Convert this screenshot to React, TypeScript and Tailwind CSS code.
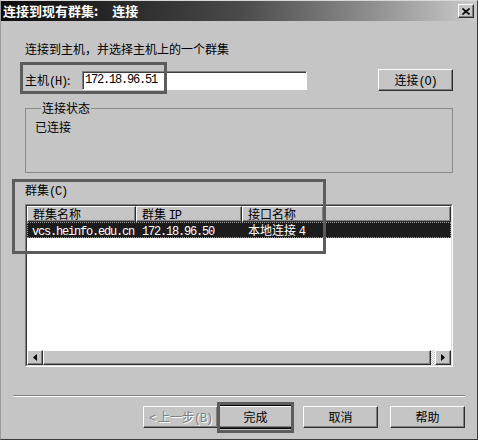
import React from 'react'

const cjk = "font-['Noto_Sans_CJK_SC','Noto_Sans_CJK_JP',sans-serif]"
const mono = "font-['Liberation_Mono',monospace] text-[12px] leading-none tracking-[-1.2px]"

const raised =
  'bg-[#c5c5c5] border border-t-white border-l-white border-r-[#2e2e2e] border-b-[#2e2e2e] shadow-[inset_-1px_-1px_0_#808080]'

const L = ({ children }: { children: React.ReactNode }) => <span className={mono}>{children}</span>

const Button = ({ children, className = '' }: { children: React.ReactNode; className?: string }) => (
  <div className={`${raised} h-[22px] w-[75px] flex items-center justify-center text-[12px] leading-[14px] ${className}`}>
    <span>{children}</span>
  </div>
)

const HeaderCell = ({ w, children }: { w: string; children?: React.ReactNode }) => (
  <div className={`${raised} ${w} h-full pl-[5px] flex items-center text-[12px] leading-[14px] shrink-0`}>
    <span className="whitespace-nowrap">{children}</span>
  </div>
)

const Arrow = ({ dir }: { dir: 'left' | 'right' }) => (
  <div className={`${raised} w-[16px] h-full flex items-center justify-center shrink-0`}>
    <svg width="4" height="7" viewBox="0 0 4 7">
      {dir === 'left' ? <path d="M4 0 L0 3.5 L4 7 Z" fill="#000" /> : <path d="M0 0 L4 3.5 L0 7 Z" fill="#000" />}
    </svg>
  </div>
)

export default function App() {
  return (
    <div className={`relative w-[478px] h-[440px] bg-[#c5c5c5] border border-t-[#d8d8d8] border-l-[#9a9a9a] border-r-[#3a3a3a] border-b-[#3a3a3a] text-black ${cjk}`}>
      {/* title bar */}
      <div className="h-[20px] bg-linear-to-r from-[#0c0c0c] via-[#4a4a4a] to-[#cbcbcb] flex items-center justify-between pl-[2px] pr-[3px]">
        <div className="text-white font-bold text-[13px] leading-[16px] flex">
          <span>连接到现有群集:</span>
          <span className="ml-[14px]">连接</span>
        </div>
        <div className={`${raised} w-[16px] h-[14px] flex items-center justify-center`}>
          <svg width="8" height="7" viewBox="0 0 8 7">
            <path d="M0.5 0.5 L7.5 6.5 M7.5 0.5 L0.5 6.5" stroke="#000" strokeWidth="1.6" />
          </svg>
        </div>
      </div>

      <div className="pl-[24px] flex flex-col">
        <div className="mt-[21px] h-[14px] text-[12px] leading-[14px]">连接到主机，并选择主机上的一个群集</div>

        <div className="mt-[13px] h-[22px] flex items-center">
          <div className="w-[57px] text-[12px] leading-[14px]">
            主机<L>(H)</L>:
          </div>
          <div className="w-[225px] h-[19px] bg-white border border-t-[#808080] border-l-[#808080] border-r-white border-b-white shadow-[inset_1px_1px_0_#404040] pl-[2px] flex items-center">
            <L>172.18.96.51</L>
          </div>
          <Button className="ml-[71px]">
            连接<L>(O)</L>
          </Button>
        </div>

        <fieldset className="mt-[10px] h-[72px] w-[428px] border border-[#8a8a8a] pl-[9px] pt-[5px]">
          <legend className="ml-[6px] px-[1px] text-[12px] leading-[14px]">连接状态</legend>
          <div className="text-[12px] leading-[14px]">已连接</div>
        </fieldset>

        <div className="mt-[10px] h-[14px] text-[12px] leading-[14px]">
          群集<L>(C)</L>
        </div>

        {/* list view */}
        <div className="mt-[7px] h-[163px] w-[428px] border border-t-[#808080] border-l-[#808080] border-r-white border-b-white">
          <div className="h-full border border-t-[#3a3a3a] border-l-[#3a3a3a] border-r-[#dcdcdc] border-b-[#dcdcdc] bg-white flex flex-col">
            <div className="h-[16px] flex shrink-0">
              <HeaderCell w="w-[109px]">群集名称</HeaderCell>
              <HeaderCell w="w-[106px]">
                群集 <L>IP</L>
              </HeaderCell>
              <HeaderCell w="w-[82px]">接口名称</HeaderCell>
              <div className={`${raised} flex-1 h-full`} />
            </div>
            <div className="h-[16px] bg-[#1c1c1c] text-white flex items-center shrink-0 border border-dotted border-[#9a9a9a] text-[12px] leading-[14px]">
              <div className="w-[108px] pl-[4px] overflow-hidden whitespace-nowrap">
                <L>vcs.heinfo.edu.cn</L>
              </div>
              <div className="w-[106px] pl-[6px]">
                <L>172.18.96.50</L>
              </div>
              <div className="pl-[6px] whitespace-nowrap">
                本地连接 <L>4</L>
              </div>
            </div>
            <div className="flex-1" />
            <div className="h-[15px] flex shrink-0">
              <Arrow dir="left" />
              <div className={`${raised} w-[388px] h-full`} />
              <div className="flex-1 h-full bg-[repeating-conic-gradient(#c5c5c5_0_25%,#ffffff_0_50%)] bg-size-[2px_2px]" />
              <Arrow dir="right" />
            </div>
          </div>
        </div>

        <div className="mt-[28px] -ml-[12px] w-[452px] h-[2px] border-t border-t-[#808080] border-b border-b-white" />

        <div className="mt-[9px] -ml-[12px] w-[452px] h-[22px] flex justify-end">
          <Button className="text-[#808080] [text-shadow:1px_1px_0_#ffffff]">
            <span className={mono}>&lt;</span>
            <span className="ml-[3px]">上一步</span>
            <L>(B)</L>
          </Button>
          <Button className="outline outline-black">完成</Button>
          <Button className="ml-[10px]">取消</Button>
          <Button className="ml-[12px]">帮助</Button>
        </div>
      </div>

      {/* annotation boxes */}
      <div className="absolute left-[19px] top-[61px] w-[147px] h-[32px] border-[3px] border-[#5c5c5c]" />
      <div className="absolute left-[11px] top-[178px] w-[314px] h-[75px] border-[3px] border-[#5c5c5c]" />
      <div className="absolute left-[216px] top-[401px] w-[77px] h-[31px] border-[3px] border-[#5c5c5c]" />
    </div>
  )
}
